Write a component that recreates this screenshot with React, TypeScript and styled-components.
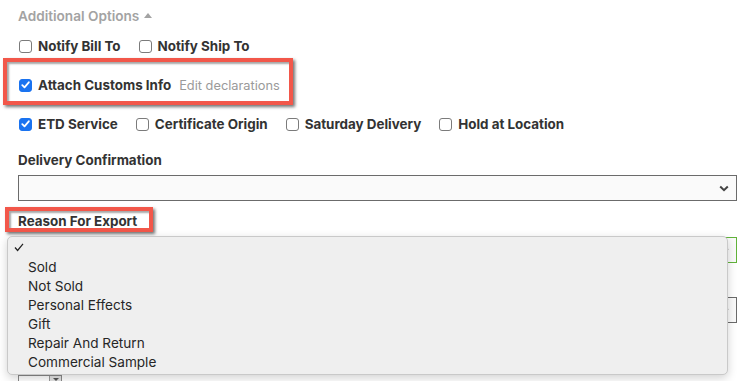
import React from "react";
import styled, { createGlobalStyle } from "styled-components";

const Global = createGlobalStyle`
  html, body { margin: 0; padding: 0; background: #ffffff; }
  body { font-family: Inter, "Noto Sans", "Liberation Sans", sans-serif; overflow: hidden; }
  * { box-sizing: border-box; }
`;

const Page = styled.div`
  position: relative;
  width: 747px;
  height: 381px;
  overflow: hidden;
  padding: 6px 10px 0 18px;
  display: flex;
  flex-direction: column;
  & > * { flex-shrink: 0; }
`;

const Line = styled.div<{ $mt?: number }>`
  position: relative;
  height: 20px;
  margin-top: ${(p) => p.$mt ?? 0}px;
  display: flex;
  align-items: center;
  gap: 17px;
`;

const Title = styled.div`
  display: flex;
  align-items: center;
  gap: 5px;
  font-size: 13.6px;
  font-weight: 600;
  color: #a3a3a3;
`;

const UpTriangle = styled.span`
  width: 0;
  height: 0;
  border-left: 4px solid transparent;
  border-right: 4px solid transparent;
  border-bottom: 5px solid #a3a3a3;
  margin-top: -1px;
`;

const Check = styled.label`
  display: flex;
  align-items: center;
  gap: 6px;
  font-size: 13.4px;
  font-weight: 700;
  color: #333333;
  white-space: nowrap;
`;

const Box = styled.span<{ $on?: boolean }>`
  width: 13px;
  height: 13px;
  margin-left: 1px;
  border-radius: 3px;
  border: 1px solid ${(p) => (p.$on ? "#1a73f0" : "#7b7b7b")};
  background: ${(p) => (p.$on ? "#1a73f0" : "#ffffff")};
  display: flex;
  align-items: center;
  justify-content: center;
`;

const Hint = styled.span`
  font-size: 12.8px;
  font-weight: 400;
  color: #9a9a9a;
  margin-left: -9px;
`;

const Label = styled.div<{ $mt?: number }>`
  position: relative;
  height: 20px;
  margin-top: ${(p) => p.$mt ?? 0}px;
  display: flex;
  align-items: center;
  font-size: 13.4px;
  font-weight: 700;
  color: #333333;
`;

const Select = styled.div<{ $mt?: number; $focus?: boolean }>`
  position: relative;
  height: 26px;
  margin-top: ${(p) => p.$mt ?? 0}px;
  border: 1px solid ${(p) => (p.$focus ? "#61b33a" : "#6b6b6b")};
  background: #fafafa;
  display: flex;
  align-items: center;
  justify-content: flex-end;
  padding-right: 7px;
`;

const Small = styled.div<{ $mt?: number }>`
  width: 44px;
  height: 20px;
  margin-top: ${(p) => p.$mt ?? 0}px;
  border: 1px solid #8a8a8a;
  display: flex;
  justify-content: flex-end;
`;

const SmallBtn = styled.div`
  width: 12px;
  height: 10px;
  background: #e3e3e3;
  border-left: 1px solid #9a9a9a;
  display: flex;
  justify-content: center;
  padding-top: 2px;
`;

const TinyTri = styled.span`
  width: 0;
  height: 0;
  border-left: 3px solid transparent;
  border-right: 3px solid transparent;
  border-top: 3px solid #555;
`;

const Callout = styled.div<{ $l: number; $t: number; $w: number; $h: number }>`
  position: absolute;
  left: ${(p) => p.$l}px;
  top: ${(p) => p.$t}px;
  width: ${(p) => p.$w}px;
  height: ${(p) => p.$h}px;
  border: 4px solid #f2574a;
  box-shadow: 2px 2px 3px rgba(0, 0, 0, 0.55), inset 2px 2px 2px rgba(0, 0, 0, 0.35);
  pointer-events: none;
`;

const Menu = styled.div`
  position: absolute;
  left: 7px;
  top: 236px;
  width: 721px;
  height: 139px;
  background: #efefef;
  border: 1px solid #c9c9c9;
  border-radius: 5px;
  box-shadow: 0 3px 10px rgba(0, 0, 0, 0.18);
  padding-top: 2px;
  font-size: 13.6px;
  color: #262626;
`;

const Option = styled.div`
  position: relative;
  height: 19px;
  line-height: 19px;
  padding-left: 20px;
`;

const Tick = styled.svg`
  position: absolute;
  left: 6px;
  top: 4px;
`;

const Chevron = () => (
  <svg width="10" height="7" viewBox="0 0 10 7">
    <polyline points="1.2,1.5 5,5.2 8.8,1.5" fill="none" stroke="#444" strokeWidth="2" />
  </svg>
);

const CheckMark = () => (
  <svg width="9" height="8" viewBox="0 0 9 8">
    <polyline points="1.3,4.2 3.5,6.3 7.8,1.3" fill="none" stroke="#fff" strokeWidth="1.8" strokeLinecap="round" strokeLinejoin="round" />
  </svg>
);

const CB = ({ on, children }: { on?: boolean; children: React.ReactNode }) => (
  <Check>
    <Box $on={on}>{on && <CheckMark />}</Box>
    {children}
  </Check>
);

const options = ["Sold", "Not Sold", "Personal Effects", "Gift", "Repair And Return", "Commercial Sample"];

export default function App() {
  return (
    <>
      <Global />
      <Page>
        <Line>
          <Title>
            Additional Options <UpTriangle />
          </Title>
        </Line>
        <Line $mt={10}>
          <CB>Notify Bill To</CB>
          <CB>Notify Ship To</CB>
        </Line>
        <Line $mt={19}>
          <CB on>Attach Customs Info</CB>
          <Hint>Edit declarations</Hint>
        </Line>
        <Line $mt={19}>
          <CB on>ETD Service</CB>
          <CB>Certificate Origin</CB>
          <CB>Saturday Delivery</CB>
          <CB>Hold at Location</CB>
        </Line>
        <Label $mt={16}>Delivery Confirmation</Label>
        <Select $mt={5}>
          <Chevron />
        </Select>
        <Label $mt={10}>Reason For Export</Label>
        <Select $mt={6} $focus>
          <Chevron />
        </Select>
        <Select $mt={34}>
          <Chevron />
        </Select>
        <Small $mt={52}>
          <SmallBtn>
            <TinyTri />
          </SmallBtn>
        </Small>

        <Callout $l={3} $t={58} $w={290} $h={47} />
        <Callout $l={5} $t={207} $w={148} $h={25} />

        <Menu>
          {options.map((o, i) => (
            <React.Fragment key={o}>
              {i === 0 && (
                <Option>
                  <Tick width="10" height="9" viewBox="0 0 10 9">
                    <polyline points="1,4.5 3.6,7.5 9,0.8" fill="none" stroke="#222" strokeWidth="1.2" />
                  </Tick>
                </Option>
              )}
              <Option>{o}</Option>
            </React.Fragment>
          ))}
        </Menu>
      </Page>
    </>
  );
}
